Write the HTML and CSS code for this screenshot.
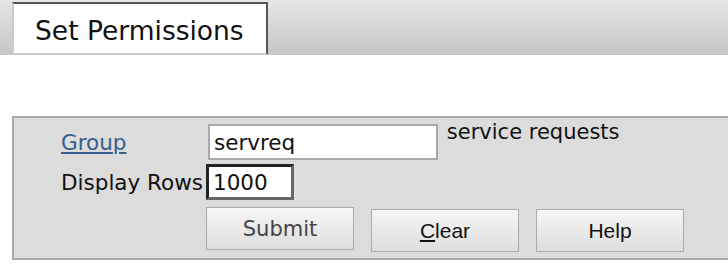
FILE: index.html
```html
<!DOCTYPE html>
<html lang="en">
<head>
    <meta charset="UTF-8">
    <title>Set Permissions</title>
    <link rel="stylesheet" href="styles.css">
</head>
<body>
    <div class="tabbar">
        <div class="tab">Set Permissions</div>
    </div>

    <form class="panel" action="#" method="GET">
        <table class="fields">
            <tr>
                <td class="label"><a href="#">Group</a></td>
                <td>
                    <input type="text" class="group-input" name="group" value="servreq">
                    <span class="desc">service requests</span>
                </td>
            </tr>
            <tr>
                <td class="label">Display Rows</td>
                <td><input type="text" class="rows-input" name="rows" value="1000"></td>
            </tr>
            <tr>
                <td></td>
                <td>
                    <div class="buttons">
                        <button type="submit" class="btn btn-submit">Submit</button>
                        <button type="reset" class="btn"><u>C</u>lear</button>
                        <button type="button" class="btn">Help</button>
                    </div>
                </td>
            </tr>
        </table>
    </form>
</body>
</html>
```

FILE: styles.css
```css
body {
    margin: 0;
    font-family: 'DejaVu Sans', Verdana, sans-serif;
    font-size: 21.5px;
    color: #111;
    background: #fff;
}

.tabbar {
    height: 53px;
    padding: 2px 0 0 12px;
    background: linear-gradient(to bottom, #e6e6e6, #c6c6c6);
}

.tab {
    display: inline-block;
    box-sizing: border-box;
    width: 256px;
    height: 53px;
    padding: 11px 0 0 21px;
    background: #fff;
    border-top: 2px solid #555;
    border-right: 2px solid #555;
    border-left: 2px solid #ccc;
    border-bottom: 2px solid #ccc;
    font-size: 26.5px;
    color: #111;
}

.panel {
    margin: 61px 0 0 12px;
    padding: 4px 0 6px 47px;
    background: #dcdcdc;
    border-top: 2px solid #aaa;
    border-left: 2px solid #aaa;
    border-bottom: 2px solid #aaa;
}

.fields {
    border-collapse: collapse;
}

.fields td {
    padding: 0;
    vertical-align: baseline;
    white-space: nowrap;
}

.fields td.label {
    padding-right: 3px;
}

.label a {
    color: #34608f;
}

.desc {
    display: inline-block;
    vertical-align: top;
    margin: -2px 0 0 2px;
    font-size: 21px;
}

input[type="text"] {
    font-family: 'DejaVu Sans', Verdana, sans-serif;
    font-size: 21.5px;
    color: #111;
    background: #fff;
    box-sizing: border-box;
    padding: 2px 4px;
}

.group-input {
    width: 230px;
    height: 36px;
    margin: 2px 0 4px 2px;
    border: 2px solid #aaa;
}

.rows-input {
    width: 88px;
    height: 36px;
    margin-bottom: 5px;
    border: 3px solid;
    border-color: #222 #666 #666 #222;
}

.buttons {
    display: flex;
    align-items: flex-start;
    gap: 17px;
    padding-top: 2px;
}

.btn {
    width: 148px;
    height: 43px;
    margin-top: 2px;
    border: 1px solid #aaa;
    background: linear-gradient(to bottom, #f6f6f6, #dedede);
    font-family: 'Liberation Sans', Arial, sans-serif;
    font-size: 21px;
    color: #111;
}

.btn-submit {
    margin-top: 0;
    font-family: 'DejaVu Sans', Verdana, sans-serif;
    color: #444;
}
```
